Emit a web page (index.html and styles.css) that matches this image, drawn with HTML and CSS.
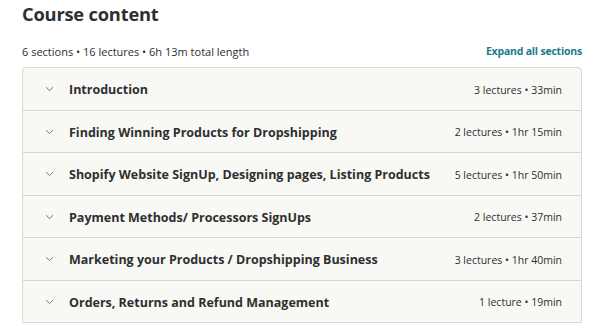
FILE: index.html
```html
<!DOCTYPE html>
<html>
<head>
<meta charset="utf-8">
<link rel="stylesheet" href="styles.css">
</head>
<body>
<div class="course">
  <h2 class="title">Course content</h2>
  <div class="summary">
    <span class="stats">6 sections • 16 lectures • 6h 13m total length</span>
    <a class="expand">Expand all sections</a>
  </div>
  <div class="sections">
    <div class="row"><span class="chev"><svg width="9" height="6" viewBox="0 0 9 6"><path d="M1 1.2 L4.5 4.5 L8 1.2" fill="none" stroke="#7a7a7a" stroke-width="1"/></svg></span><span class="name">Introduction</span><span class="meta">3 lectures • 33min</span></div>
    <div class="row"><span class="chev"><svg width="9" height="6" viewBox="0 0 9 6"><path d="M1 1.2 L4.5 4.5 L8 1.2" fill="none" stroke="#7a7a7a" stroke-width="1"/></svg></span><span class="name">Finding Winning Products for Dropshipping</span><span class="meta">2 lectures • 1hr 15min</span></div>
    <div class="row"><span class="chev"><svg width="9" height="6" viewBox="0 0 9 6"><path d="M1 1.2 L4.5 4.5 L8 1.2" fill="none" stroke="#7a7a7a" stroke-width="1"/></svg></span><span class="name">Shopify Website SignUp, Designing pages, Listing Products</span><span class="meta">5 lectures • 1hr 50min</span></div>
    <div class="row"><span class="chev"><svg width="9" height="6" viewBox="0 0 9 6"><path d="M1 1.2 L4.5 4.5 L8 1.2" fill="none" stroke="#7a7a7a" stroke-width="1"/></svg></span><span class="name">Payment Methods/ Processors SignUps</span><span class="meta">2 lectures • 37min</span></div>
    <div class="row"><span class="chev"><svg width="9" height="6" viewBox="0 0 9 6"><path d="M1 1.2 L4.5 4.5 L8 1.2" fill="none" stroke="#7a7a7a" stroke-width="1"/></svg></span><span class="name">Marketing your Products / Dropshipping Business</span><span class="meta">3 lectures • 1hr 40min</span></div>
    <div class="row"><span class="chev"><svg width="9" height="6" viewBox="0 0 9 6"><path d="M1 1.2 L4.5 4.5 L8 1.2" fill="none" stroke="#7a7a7a" stroke-width="1"/></svg></span><span class="name">Orders, Returns and Refund Management</span><span class="meta">1 lecture • 19min</span></div>
  </div>
</div>
</body>
</html>
```

FILE: styles.css
```css
* { box-sizing: border-box; }
body {
  margin: 0;
  background: #fff;
  font-family: "Open Sans", "Noto Sans", sans-serif;
  color: #2d2f31;
}
.course {
  width: 560px;
  margin-left: 22px;
}
.title {
  margin: 0;
  padding-top: 1px;
  font-size: 18.3px;
  font-weight: 700;
  line-height: 26px;
  color: #2d2f31;
  letter-spacing: -0.2px;
}
.summary {
  display: flex;
  justify-content: space-between;
  align-items: center;
  margin-top: 16px;
  height: 16px;
  font-size: 10.5px;
}
.stats { color: #2d2f31; font-size: 11px; }
.expand {
  color: #1a7a8c;
  font-weight: 700;
  letter-spacing: -0.2px;
}
.sections {
  margin-top: 8px;
  border: 1px solid #d9d9cf;
  border-radius: 4px 4px 0 0;
  background: #f8f8f4;
}
.row {
  display: flex;
  align-items: center;
  height: 42.5px;
  padding-left: 22px;
  padding-right: 19px;
  border-top: 1px solid #d9d9cf;
}
.row:first-child { border-top: none; height: 41.5px; }
.chev {
  display: flex;
  width: 24px;
  padding-top: 1px;
}
.name {
  flex: 1;
  font-size: 12.5px;
  font-weight: 700;
  color: #2d2f31;
  letter-spacing: 0;
  padding-top: 2px;
}
.meta {
  font-size: 10.5px;
  color: #2d2f31;
  padding-top: 2px;
}
```
